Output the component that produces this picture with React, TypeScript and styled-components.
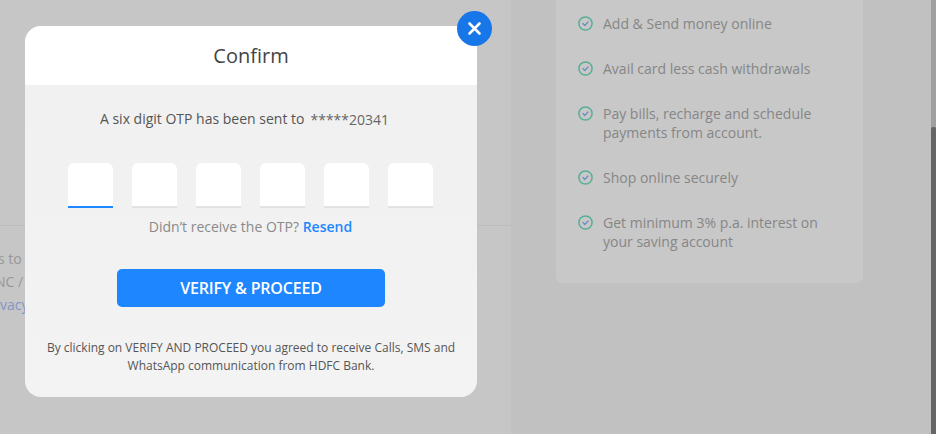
import React from 'react';
import styled, { createGlobalStyle } from 'styled-components';

const GlobalStyle = createGlobalStyle`
  html, body {
    margin: 0;
    padding: 0;
    height: 100%;
    overflow: hidden;
    font-family: "Open Sans", "Noto Sans", sans-serif;
  }
`;

const Page = styled.div`
  position: relative;
  display: flex;
  width: 936px;
  height: 434px;
  overflow: hidden;
  background: #c1c1c1;
`;

const LeftPanel = styled.div`
  width: 511px;
  flex-shrink: 0;
  padding-top: 225px;
  background: #c6c6c6;
  overflow: hidden;
`;

const Terms = styled.div`
  border-top: 1px solid #bcbcbc;
  padding-top: 21px;
  font-size: 14px;
  line-height: 23px;
  color: #989898;
  white-space: nowrap;
`;

const TermsLine = styled.div<{ $shift: number }>`
  margin-left: ${(p) => p.$shift}px;
`;

const TermsLink = styled.span`
  color: #8494c4;
`;

const RightPanel = styled.div`
  flex: 1;
  padding: 0 68px 0 45px;
`;

const FeatureCard = styled.ul`
  list-style: none;
  margin: 0;
  padding: 14px 22px 31px;
  height: 283px;
  box-sizing: border-box;
  background: #c8c8c8;
  border-radius: 0 0 6px 6px;
  display: flex;
  flex-direction: column;
  gap: 26px;
`;

const FeatureItem = styled.li`
  display: flex;
  gap: 10px;
  font-size: 14px;
  line-height: 19px;
  color: #868686;
`;

const CheckIcon = styled.svg`
  width: 15px;
  height: 15px;
  flex-shrink: 0;
  margin-top: 2px;
`;

const Scrollbar = styled.div`
  width: 5px;
  flex-shrink: 0;
  display: flex;
  flex-direction: column;
  justify-content: flex-end;
  background: #a0a0a0;
`;

const ScrollThumb = styled.div`
  height: 307px;
  background: #666666;
  border-radius: 2px 2px 0 0;
`;

const Modal = styled.div`
  position: absolute;
  left: 25px;
  top: 26px;
  width: 452px;
  height: 371px;
  display: flex;
  flex-direction: column;
  border-radius: 16px;
  overflow: hidden;
  background: linear-gradient(#f0f0f0, #f3f3f3);
`;

const CloseButton = styled.button`
  position: absolute;
  left: 457px;
  top: 11px;
  width: 35px;
  height: 35px;
  padding: 0;
  border: none;
  border-radius: 50%;
  background: #1877e8;
  display: flex;
  align-items: center;
  justify-content: center;
`;

const ModalHeader = styled.div`
  height: 59px;
  flex-shrink: 0;
  display: flex;
  align-items: center;
  justify-content: center;
  background: #ffffff;
  font-size: 20px;
  color: #444444;
`;

const ModalBody = styled.div`
  flex: 1;
  display: flex;
  flex-direction: column;
  align-items: center;
  padding-top: 24px;
`;

const SentText = styled.div`
  display: flex;
  gap: 6px;
  margin-right: 13px;
  font-size: 14px;
  line-height: 19px;
  color: #555555;
`;

const MaskedNumber = styled.span`
  color: #666666;
  position: relative;
  top: 1px;
`;

const OtpRow = styled.div`
  display: flex;
  gap: 19px;
  margin: 35px 1px 0 0;
`;

const OtpBox = styled.div<{ $active?: boolean }>`
  width: 45px;
  height: 45px;
  box-sizing: border-box;
  background: #ffffff;
  border-radius: 6px 6px 0 0;
  border-bottom: 2px solid ${(p) => (p.$active ? '#1e87ff' : '#e2e2e2')};
`;

const ResendRow = styled.div`
  margin: 9px 1px 0 0;
  font-size: 14px;
  line-height: 19px;
  color: #8a8a8a;
`;

const ResendLink = styled.span`
  color: #1e87ff;
  font-weight: 600;
`;

const VerifyButton = styled.button`
  width: 268px;
  height: 38px;
  margin-top: 33px;
  border: none;
  border-radius: 5px;
  background: #1e87ff;
  color: #ffffff;
  font-family: inherit;
  font-size: 16px;
  font-weight: 600;
  letter-spacing: -0.2px;
`;

const Disclaimer = styled.p`
  margin: 32px 0 0;
  width: 430px;
  text-align: center;
  font-size: 12px;
  line-height: 18px;
  color: #555555;
`;

const features = [
  ['Add & Send money online'],
  ['Avail card less cash withdrawals'],
  ['Pay bills, recharge and schedule', 'payments from account.'],
  ['Shop online securely'],
  ['Get minimum 3% p.a. interest on', 'your saving account'],
];

const Check = () => (
  <CheckIcon viewBox="0 0 15 15" fill="none">
    <circle cx="7.5" cy="7.5" r="6.6" stroke="#5aad95" strokeWidth="1.5" />
    <path d="M5 7.6l1.8 1.8L10 6" stroke="#6c93c4" strokeWidth="1.4" strokeLinecap="round" strokeLinejoin="round" />
  </CheckIcon>
);

const App: React.FC = () => {
  return (
    <Page>
      <GlobalStyle />
      <LeftPanel>
        <Terms>
          <TermsLine $shift={-2}>s to c</TermsLine>
          <TermsLine $shift={-5}>NC /</TermsLine>
          <TermsLine $shift={0}>
            <TermsLink>vacy</TermsLink>
          </TermsLine>
        </Terms>
      </LeftPanel>
      <RightPanel>
        <FeatureCard>
          {features.map((lines) => (
            <FeatureItem key={lines[0]}>
              <Check />
              <div>
                {lines.map((line) => (
                  <div key={line}>{line}</div>
                ))}
              </div>
            </FeatureItem>
          ))}
        </FeatureCard>
      </RightPanel>
      <Scrollbar>
        <ScrollThumb />
      </Scrollbar>

      <Modal>
        <ModalHeader>Confirm</ModalHeader>
        <ModalBody>
          <SentText>
            <span>A six digit OTP has been sent to</span>
            <MaskedNumber>*****20341</MaskedNumber>
          </SentText>
          <OtpRow>
            {[0, 1, 2, 3, 4, 5].map((i) => (
              <OtpBox key={i} $active={i === 0} />
            ))}
          </OtpRow>
          <ResendRow>
            Didn’t receive the OTP? <ResendLink>Resend</ResendLink>
          </ResendRow>
          <VerifyButton>VERIFY &amp; PROCEED</VerifyButton>
          <Disclaimer>
            By clicking on VERIFY AND PROCEED you agreed to receive Calls, SMS and WhatsApp communication from HDFC Bank.
          </Disclaimer>
        </ModalBody>
      </Modal>
      <CloseButton aria-label="Close">
        <svg width="15" height="15" viewBox="0 0 15 15" fill="none">
          <path d="M2.5 2.5l10 10M12.5 2.5l-10 10" stroke="#fff" strokeWidth="2.6" strokeLinecap="round" />
        </svg>
      </CloseButton>
    </Page>
  );
};

export default App;
